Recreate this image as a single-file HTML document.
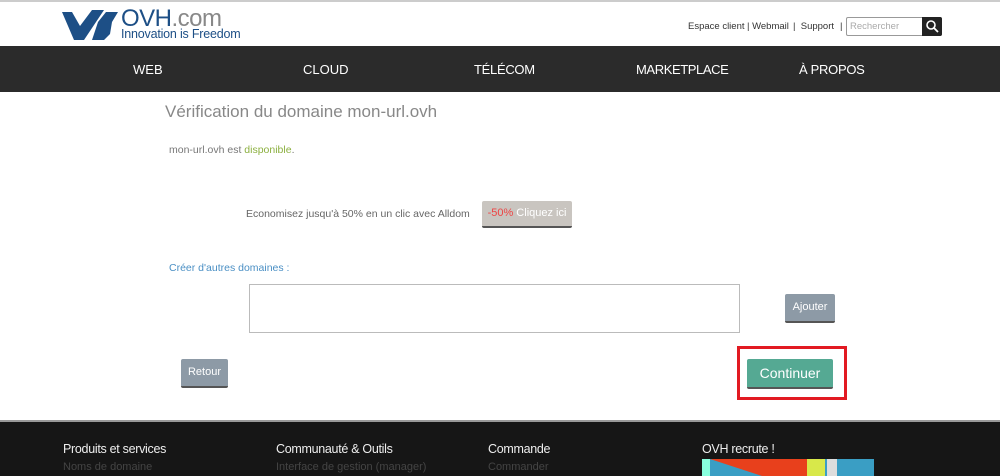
<!DOCTYPE html>
<html><head><meta charset="utf-8"><style>
*{margin:0;padding:0;box-sizing:border-box}
body{width:1000px;height:476px;overflow:hidden;background:#fff;font-family:"Liberation Sans",sans-serif;position:relative}
.a{position:absolute;white-space:nowrap}
.btn{position:absolute;color:#fff;font-size:12px;text-align:center;border-bottom:2px solid #555;border-radius:2px}
</style></head><body>
<div class="a" style="left:0;top:0;width:1000px;height:2px;background:#ccc"></div>
<svg class="a" style="left:60px;top:8px" width="62" height="34" viewBox="0 0 62 34">
<path d="M2 4 L12 4 L20 18 L32 2 L44 2 L24 32 L14 32 Z" fill="#1d4f86"/>
<path d="M38 14 L46 4 L58 4 L52 14 L50 26 L44 32 L32 32 Z" fill="#1d4f86"/>
</svg>
<div class="a" style="left:121px;top:5px;font-size:24px;color:#1d4f86;letter-spacing:-.5px">OVH<span style="color:#888">.com</span></div>
<div class="a" style="left:121px;top:27px;font-size:12.5px;color:#1d4f86;letter-spacing:-.2px">Innovation is Freedom</div>
<div class="a" style="left:688px;top:21px;font-size:9.5px;color:#333">Espace client</div>
<div class="a" style="left:747px;top:21px;font-size:9.5px;color:#333">| Webmail</div>
<div class="a" style="left:793px;top:21px;font-size:9.5px;color:#333">| &nbsp;Support</div>
<div class="a" style="left:840px;top:21px;font-size:9.5px;color:#333">|</div>
<div class="a" style="left:846px;top:17px;width:96px;height:19px;border:1px solid #999;border-radius:2px;background:#fff"></div>
<div class="a" style="left:850px;top:21px;font-size:9.5px;color:#aaa">Rechercher</div>
<div class="a" style="left:922px;top:17px;width:20px;height:19px;background:#222;border-radius:0 2px 2px 0"></div>
<svg class="a" style="left:925px;top:19px" width="14" height="14"><circle cx="6" cy="6" r="4" stroke="#fff" stroke-width="1.6" fill="none"/><line x1="9" y1="9" x2="13" y2="13" stroke="#fff" stroke-width="1.8"/></svg>
<div class="a" style="left:0;top:46px;width:1000px;height:46px;background:#2b2b2b"></div>
<div class="a" style="left:133px;top:62px;font-size:13px;color:#fff">WEB</div>
<div class="a" style="left:303px;top:62px;font-size:13px;color:#fff">CLOUD</div>
<div class="a" style="left:474px;top:62px;font-size:13px;color:#fff;letter-spacing:-.3px">TÉLÉCOM</div>
<div class="a" style="left:636px;top:62px;font-size:13px;color:#fff;letter-spacing:-.4px">MARKETPLACE</div>
<div class="a" style="left:799px;top:62px;font-size:13px;color:#fff;letter-spacing:-.3px">À PROPOS</div>
<div class="a" style="left:165px;top:102px;font-size:17px;color:#888">Vérification du domaine mon-url.ovh</div>
<div class="a" style="left:169px;top:144px;font-size:10.5px;color:#777">mon-url.ovh est <span style="color:#8cb040">disponible</span>.</div>
<div class="a" style="left:246px;top:208px;font-size:10.5px;color:#666">Economisez jusqu'à 50% en un clic avec Alldom</div>
<div class="btn" style="left:482px;top:201px;width:90px;height:27px;background:#c9c5c0;line-height:25px;font-size:11px"><span style="color:#e44">-50%</span> Cliquez ici</div>
<div class="a" style="left:169px;top:262px;font-size:10.5px;color:#4a8fc4">Créer d'autres domaines :</div>
<div class="a" style="left:249px;top:284px;width:491px;height:49px;border:1px solid #bbb"></div>
<div class="btn" style="left:785px;top:294px;width:50px;height:29px;background:#8d9aa6;line-height:27px;font-size:11px">Ajouter</div>
<div class="btn" style="left:181px;top:359px;width:47px;height:29px;background:#8d9aa6;line-height:27px;font-size:11px">Retour</div>
<div class="a" style="left:737px;top:346px;width:110px;height:54px;border:3px solid #e21a22"></div>
<div class="btn" style="left:747px;top:359px;width:86px;height:30px;background:#55a993;line-height:28px;font-size:14px">Continuer</div>
<div class="a" style="left:0;top:420px;width:1000px;height:2px;background:#999"></div>
<div class="a" style="left:0;top:422px;width:1000px;height:54px;background:#161616"></div>
<div class="a" style="left:63px;top:442px;font-size:12.5px;color:#eee;letter-spacing:-.3px">Produits et services</div>
<div class="a" style="left:276px;top:442px;font-size:12.5px;color:#eee;letter-spacing:-.3px">Communauté &amp; Outils</div>
<div class="a" style="left:488px;top:442px;font-size:12.5px;color:#eee;letter-spacing:-.3px">Commande</div>
<div class="a" style="left:702px;top:442px;font-size:12.5px;color:#eee;letter-spacing:-.3px">OVH recrute !</div>
<div class="a" style="left:63px;top:461px;font-size:11px;color:#444">Noms de domaine</div>
<div class="a" style="left:276px;top:461px;font-size:11px;color:#444">Interface de gestion (manager)</div>
<div class="a" style="left:488px;top:461px;font-size:11px;color:#444">Commander</div>
<svg class="a" style="left:702px;top:459px" width="172" height="17"><rect width="172" height="17" fill="#3a9ec4"/><polygon points="8,0 105,0 105,17 60,17" fill="#e8401c"/><rect x="105" y="0" width="18" height="17" fill="#d8e84a"/><rect x="125" y="0" width="10" height="17" fill="#ddd"/><rect x="0" y="0" width="8" height="17" fill="#8fd"/></svg>
</body></html>
